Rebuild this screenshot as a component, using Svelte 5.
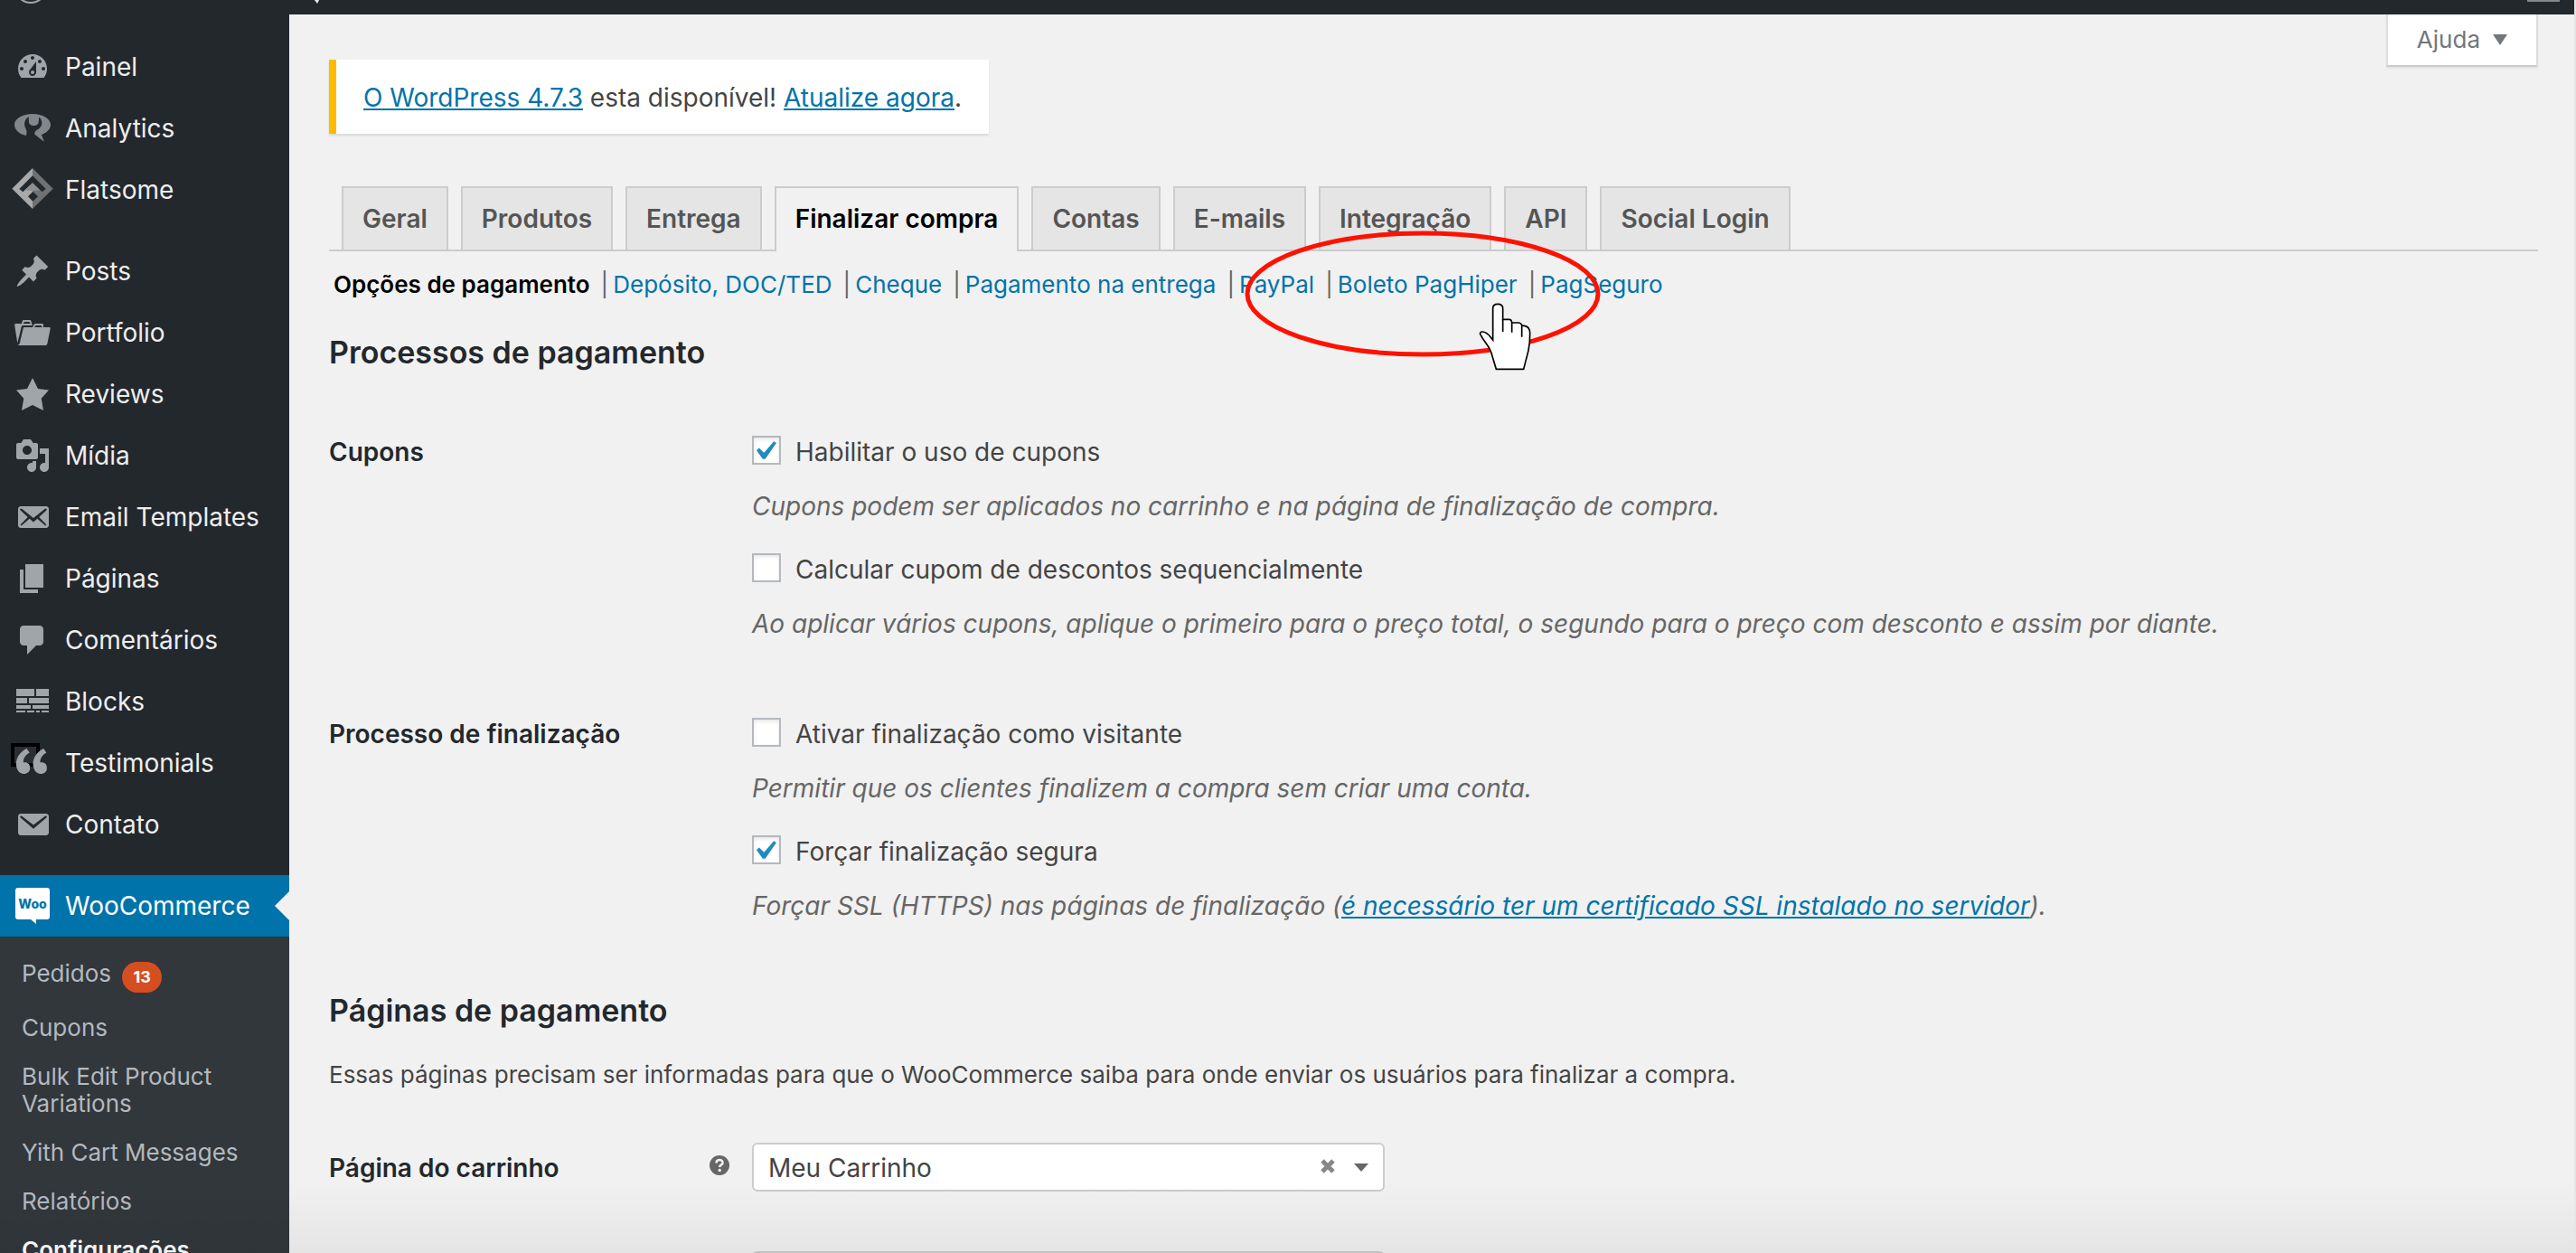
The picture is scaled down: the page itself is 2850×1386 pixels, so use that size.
<script>
  const menuTop = [
    { label: 'Painel', icon: 'dashboard' },
    { label: 'Analytics', icon: 'analytics' },
    { label: 'Flatsome', icon: 'flatsome' }
  ];
  const menuContent = [
    { label: 'Posts', icon: 'pin' },
    { label: 'Portfolio', icon: 'portfolio' },
    { label: 'Reviews', icon: 'star' },
    { label: 'Mídia', icon: 'media' },
    { label: 'Email Templates', icon: 'email' },
    { label: 'Páginas', icon: 'page' },
    { label: 'Comentários', icon: 'comment' },
    { label: 'Blocks', icon: 'blocks' },
    { label: 'Testimonials', icon: 'quote' },
    { label: 'Contato', icon: 'envelope' }
  ];
  const submenu = [
    { label: 'Pedidos', count: 13 },
    { label: 'Cupons' },
    { label: 'Bulk Edit Product Variations' },
    { label: 'Yith Cart Messages' },
    { label: 'Relatórios' },
    { label: 'Configurações', current: true }
  ];
  const tabs = ['Geral', 'Produtos', 'Entrega', 'Finalizar compra', 'Contas', 'E-mails', 'Integração', 'API', 'Social Login'];
  const activeTab = 'Finalizar compra';
  const sections = ['Opções de pagamento', 'Depósito, DOC/TED', 'Cheque', 'Pagamento na entrega', 'PayPal', 'Boleto PagHiper', 'PagSeguro'];

  let groups = $state([
    {
      title: 'Cupons',
      options: [
        { id: 'coupons', label: 'Habilitar o uso de cupons', checked: true, help: 'Cupons podem ser aplicados no carrinho e na página de finalização de compra.' },
        { id: 'sequential', label: 'Calcular cupom de descontos sequencialmente', checked: false, help: 'Ao aplicar vários cupons, aplique o primeiro para o preço total, o segundo para o preço com desconto e assim por diante.' }
      ]
    },
    {
      title: 'Processo de finalização',
      options: [
        { id: 'guest', label: 'Ativar finalização como visitante', checked: false, help: 'Permitir que os clientes finalizem a compra sem criar uma conta.' },
        { id: 'ssl', label: 'Forçar finalização segura', checked: true, help: 'Forçar SSL (HTTPS) nas páginas de finalização (', link: 'é necessário ter um certificado SSL instalado no servidor', after: ').' }
      ]
    }
  ]);

  // Single-path icons on a 20-unit grid
  const paths = {
    dashboard: 'M3.76 16h12.48c1.1-1.37 1.76-3.11 1.76-5 0-4.42-3.58-8-8-8s-8 3.58-8 8c0 1.89.66 3.63 1.76 5zM10 4c.55 0 1 .45 1 1s-.45 1-1 1-1-.45-1-1 .45-1 1-1zM6 6c.55 0 1 .45 1 1s-.45 1-1 1-1-.45-1-1 .45-1 1-1zm8 0c.55 0 1 .45 1 1s-.45 1-1 1-1-.45-1-1 .45-1 1-1zm-5.37 5.55L12 7v6c0 1.1-.9 2-2 2s-2-.9-2-2c0-.57.24-1.08.63-1.45zM4 10c.55 0 1 .45 1 1s-.45 1-1 1-1-.45-1-1 .45-1 1-1zm12 0c.55 0 1 .45 1 1s-.45 1-1 1-1-.45-1-1 .45-1 1-1zm-5 3c0-.55-.45-1-1-1s-1 .45-1 1 .45 1 1 1 1-.45 1-1z',
    pin: 'M10.44 3.02l1.82-1.82 6.36 6.35-1.83 1.82c-1.05-.68-2.48-.57-3.41.36l-.75.75c-.92.93-1.04 2.35-.35 3.41l-1.83 1.82-2.41-2.41-2.8 2.79c-.42.42-3.38 2.71-3.8 2.29s1.86-3.39 2.28-3.81l2.79-2.79L4.1 9.36l1.83-1.82c1.05.69 2.48.57 3.4-.36l.75-.75c.93-.92 1.05-2.35.36-3.41z',
    portfolio: 'M4 5H.78c-.37 0-.74.32-.69.84l1.56 9.99S3.5 8.47 3.86 6.7c.11-.53.61-.7.98-.7H10s-.7-2.08-.77-2.31C9.11 3.25 8.89 3 8.45 3H5.14c-.36 0-.7.23-.8.64C4.25 4.04 4 5 4 5zm4.88 0h-4s.42-1 .87-1h2.13c.48 0 1 1 1 1zM2.67 16.25c-.31.47-.76.75-1.26.75h15.73c.54 0 .92-.31 1.03-.83.44-2.19 1.68-8.44 1.68-8.44.07-.5-.3-.73-.62-.73H16V5.53c0-.16-.26-.53-.66-.53h-3.76c-.52 0-.87.58-.87.58L10 7H5.59c-.32 0-.63.19-.69.5 0 0-1.59 6.7-1.72 7.33-.07.37-.22.99-.51 1.42zM15.38 7H11s.58-1 1.13-1h2.29c.71 0 .96 1 .96 1z',
    star: 'M10 1l3 6 6 .75-4.12 4.62L16 19l-6-3-6 3 1.13-6.63L1 7.75 7 7z',
    media: 'M13 11V4c0-.55-.45-1-1-1h-1.67L9 1H5L3.67 3H2c-.55 0-1 .45-1 1v7c0 .55.45 1 1 1h10c.55 0 1-.45 1-1zM7 4.5c1.38 0 2.5 1.12 2.5 2.5S8.38 9.5 7 9.5 4.5 8.38 4.5 7 5.62 4.5 7 4.5zM14 6h5v10.5c0 1.38-1.12 2.5-2.5 2.5S14 17.88 14 16.5s1.12-2.5 2.5-2.5c.17 0 .34.02.5.05V9h-3V6zm-4 8.05V13h2v3.5c0 1.38-1.12 2.5-2.5 2.5S7 17.88 7 16.5 8.12 14 9.5 14c.17 0 .34.02.5.05z',
    email: 'M19 14.5v-9c0-.83-.67-1.5-1.5-1.5H3.49c-.83 0-1.49.67-1.49 1.5v9c0 .83.66 1.5 1.49 1.5H17.5c.83 0 1.5-.67 1.5-1.5zm-1.31-9.11c.33.33.15.67-.03.84L13.6 9.95l3.9 4.06c.12.14.2.36.06.51-.13.16-.43.15-.56.05l-4.37-3.73-2.14 1.95-2.13-1.95-4.37 3.73c-.13.1-.43.11-.56-.05-.14-.15-.06-.37.06-.51l3.9-4.06-4.06-3.72c-.18-.17-.36-.51-.03-.84s.67-.17.95.07l6.24 5.04 6.25-5.04c.28-.24.62-.4.95-.07z',
    page: 'M6 15V2h10v13H6zm-1 1h8v2H3V5h2v11z',
    comment: 'M5 2h9c1.1 0 2 .9 2 2v7c0 1.1-.9 2-2 2h-2l-5 5v-5H5c-1.1 0-2-.9-2-2V4c0-1.1.9-2 2-2z',
    blocks: 'M1 3h10v4H1zM12 3h7v4h-7zM1 8h6v3H1zM8 8h11v3H8zM1 12h8v2H1zM10 12h9v2h-9zM1 15h5v1H1zM7 15h4v1H7zM12 15h2v1h-2zM15 15h4v1h-4z',
    envelope: 'M19 14.5v-9c0-.83-.67-1.5-1.5-1.5H3.49C2.66 4 2 4.67 2 5.5v9c0 .83.66 1.5 1.49 1.5H17.5c.83 0 1.5-.67 1.5-1.5zM17.69 5.39c.33.33.15.67-.03.84L10.5 12.4 3.34 6.23c-.18-.17-.36-.51-.03-.84s.67-.17.95.07l6.24 4.74 6.24-4.74c.28-.24.62-.4.95-.07z',
    quote: 'M9.49 13.22c0-.74-.2-1.38-.61-1.9-.62-.78-1.83-.88-2.53-.72-.29-1.65 1.11-3.75 2.92-4.65L7.88 4c-2.73 1.3-5.42 4.28-4.96 8.05C3.21 14.43 4.59 16 6.54 16c.85 0 1.56-.25 2.12-.75s.83-1.18.83-2.03zm8.05 0c0-.74-.2-1.38-.61-1.9-.63-.78-1.83-.88-2.53-.72-.29-1.65 1.11-3.75 2.92-4.65L15.93 4c-2.73 1.3-5.41 4.28-4.95 8.05.28 2.38 1.66 3.95 3.61 3.95.85 0 1.56-.25 2.12-.75s.83-1.18.83-2.03z'
  };
</script>

{#snippet menuIcon(name)}
  {#if name === 'analytics'}
    <svg class="icon" viewBox="0 0 120 120" aria-hidden="true">
      <path class="muted" d="M60 12C93 12 120 28 120 48C120 62 108 74 90 81L98 104L66 79Q66 72 73 66C94 57 96 38 82 22L80 39C79 55 49 55 48 39L47 22C33 30 30 46 37 60C42 68 41 76 39 84C16 79 0 65 0 48C0 28 27 12 60 12z" />
    </svg>
  {:else if name === 'flatsome'}
    <svg class="icon" viewBox="0 0 120 120" aria-hidden="true">
      <g transform="translate(-8 -12)">
        <path fill="#a9a9a9" d="M68 0L0 68L68 135z" />
        <path fill="#707172" d="M68 0L136 68L68 135z" />
        <path fill="#23282d" d="M68 25L112 69L100 79L68 49L36 79L24 69z" />
        <path fill="#8f8f8f" d="M68 49L92 73L68 76L44 73z" />
        <path fill="#23282d" d="M69 78L86 94L69 110L53 94z" />
      </g>
    </svg>
  {:else}
    <svg class="icon" viewBox="0 0 20 20" aria-hidden="true">
      {#if name === 'quote'}
        <path d="M-1 0h14v11H-1z" fill="#2b2f33" stroke="#000" stroke-width="2" />
        <path d={paths.quote} transform="translate(-2.4 -2.6) scale(1.16)" />
      {:else}
        <path d={paths[name]} fill-rule="evenodd" />
      {/if}
    </svg>
  {/if}
{/snippet}

{#snippet menuList(items)}
  <ul class="menu">
    {#each items as item}
      <li><a class="menu-link" href="#{item.icon}">{@render menuIcon(item.icon)}{item.label}</a></li>
    {/each}
  </ul>
{/snippet}

<div class="shell">
  <header class="adminbar">
    <svg class="bar-logo" viewBox="0 0 40 16" aria-hidden="true"><circle cx="20" cy="-14" r="17" fill="none" stroke="#a0a5aa" stroke-width="2" /></svg>
    <svg class="bar-bubble" viewBox="0 0 8 16" aria-hidden="true"><path d="M1 0h5L4 4z" fill="#eee" /></svg>
    <span class="bar-avatar"></span>
  </header>

  <div class="body">
    <nav class="sidebar" aria-label="Menu principal">
      {@render menuList(menuTop)}
      {@render menuList(menuContent)}
      <a class="menu-link current" href="#woocommerce">
        <svg class="icon" viewBox="0 0 40 40" aria-hidden="true">
          <path fill="#fff" d="M4 0h32a3 3 0 0 1 3 3v29a3 3 0 0 1-3 3H24v5l-6-5H4a3 3 0 0 1-3-3V3a3 3 0 0 1 3-3z" />
          <text x="20" y="23" text-anchor="middle" fill="#0073aa">Woo</text>
        </svg>
        WooCommerce
      </a>
      <ul class="submenu">
        {#each submenu as item}
          <li>
            <a class:selected={item.current} href="#sub">
              <span>{item.label}</span>
              {#if item.count}<span class="badge">{item.count}</span>{/if}
            </a>
          </li>
        {/each}
      </ul>
    </nav>

    <main>
      <div class="top">
        <p class="notice"><a href="#versao">O WordPress 4.7.3</a> esta disponível! <a href="#atualizar">Atualize agora</a>.</p>
        <button class="help" type="button">
          Ajuda
          <svg viewBox="0 0 16 12" aria-hidden="true"><path d="M0 0h16L8 12z" /></svg>
        </button>
      </div>

      <nav class="tabs" aria-label="Abas">
        {#each tabs as tab}
          <a class="tab" class:active={tab === activeTab} href="#tab">{tab}</a>
        {/each}
      </nav>

      <nav class="sections" aria-label="Seções">
        {#each sections as section, i}
          <span>{#if i > 0}|{/if}<a class:active={i === 0} href="#section">{section}</a></span>
        {/each}
        <svg class="ring" viewBox="0 0 394 140" aria-hidden="true"><ellipse cx="197" cy="70" rx="194" ry="67" /></svg>
        <svg class="hand" viewBox="0 0 240 285" aria-hidden="true">
          <path fill="#fff" d="M80 153V48Q80 34 96 34Q113 34 113 48V85H136Q142 86 143 96H166Q174 97 177 106H184Q202 108 203 130L202 160Q199 190 191 215L182 250H91L79 210Q73 185 60 168Q45 148 38 134Q36 125 47 126Q60 128 72 143z" />
          <path fill="none" d="M113 84V126M143 96V128M176 106V143" />
        </svg>
      </nav>

      <h2>Processos de pagamento</h2>
      <div class="groups">
        {#each groups as group}
          <div class="field" role="group" aria-label={group.title}>
            <h3>{group.title}</h3>
            <div class="options">
              {#each group.options as option}
                <div>
                  <label class="check" for={option.id}>
                    <span class="box">
                      <input id={option.id} type="checkbox" bind:checked={option.checked} />
                      {#if option.checked}
                        <svg class="tick" viewBox="5.78 4.89 10.4 9.33" aria-hidden="true"><path d="M14.83 4.89l1.34.94-5.81 8.38H9.02L5.78 9.67l1.34-1.25 2.57 2.4z" /></svg>
                      {/if}
                    </span>
                    {option.label}
                  </label>
                  <p class="description">{option.help}{#if option.link}<a href="#ssl">{option.link}</a>{option.after}{/if}</p>
                </div>
              {/each}
            </div>
          </div>
        {/each}
      </div>

      <h2 class="pages-title">Páginas de pagamento</h2>
      <p class="intro">Essas páginas precisam ser informadas para que o WooCommerce saiba para onde enviar os usuários para finalizar a compra.</p>
      <div class="selects">
        <div class="field">
          <div class="label-cell">
            <label for="cart-page">Página do carrinho</label>
            <svg class="tip" viewBox="0 0 22 22" aria-hidden="true">
              <circle cx="11" cy="11" r="11" />
              <path d="M7.5 8.5C7.5 3.5 15 4 14.5 8.500C14.2 10.5 11.2 10.5 11.2 13" fill="none" stroke="#f1f1f1" stroke-width="2.6" />
              <circle cx="11.2" cy="16.5" r="1.7" fill="#f1f1f1" />
            </svg>
          </div>
          <div class="picker">
            <select id="cart-page"><option>Meu Carrinho</option></select>
            <button class="clear" type="button" aria-label="Limpar">
              <svg viewBox="0 0 18 18" aria-hidden="true"><path d="M3 3L15 15M15 3L3 15" /></svg>
            </button>
            <svg class="caret" viewBox="0 0 16 9" aria-hidden="true"><path d="M0 0h16L8 9z" /></svg>
          </div>
        </div>
        <div class="field">
          <span></span>
          <div class="picker"><select aria-label="Página de finalização"></select></div>
        </div>
      </div>
    </main>
  </div>
  <div class="fade"></div>
</div>

<style>
  :global(body) { margin: 0; background: #f1f1f1; }
  .shell {
    position: relative;
    box-sizing: border-box;
    height: 100vh;
    overflow: hidden;
    border-right: 2px solid #e6e6e6;
    background: #f1f1f1;
    color: #444;
    font: 28px/40px Inter, "Liberation Sans", sans-serif;
    display: flex;
    flex-direction: column;
  }
  a { color: #0073aa; }
  p, h2, h3, ul { margin: 0; padding: 0; }
  ul { list-style: none; }

  .adminbar { display: flex; flex: none; height: 16px; background: #23282d; }
  .bar-logo { width: 40px; height: 16px; margin-left: 14px; }
  .bar-bubble { width: 8px; height: 16px; margin-left: 293px; }
  .bar-avatar { width: 36px; height: 2px; margin: 0 16px 0 auto; background: #82878c; }

  .body { display: flex; flex: 1; min-height: 0; }
  .sidebar { flex: none; box-sizing: border-box; width: 320px; padding-top: 24px; background: #23282d; }
  .menu { margin-bottom: 22px; }
  .menu-link {
    display: flex;
    align-items: center;
    gap: 16px;
    padding: 14px 16px;
    color: #eee;
    text-decoration: none;
  }
  .icon { flex: none; width: 40px; height: 40px; overflow: visible; fill: #a0a5aa; }
  .icon text { font: 800 14px Inter, sans-serif; }
  .muted { fill: #82878c; }
  .current { position: relative; background: #0073aa; color: #fff; }
  .current::after {
    content: "";
    position: absolute;
    right: 0;
    border: 16px solid transparent;
    border-left-width: 0;
    border-right-color: #f1f1f1;
  }
  .submenu { height: 400px; padding-top: 14px; background: #32373c; }
  .submenu a {
    display: flex;
    align-items: flex-start;
    gap: 12px;
    padding: 12px 24px;
    color: #b4b9be;
    font-size: 26px;
    line-height: 30px;
    text-decoration: none;
  }
  .submenu .selected { color: #fff; font-weight: 600; }
  .badge {
    min-width: 44px;
    margin-top: 2px;
    border-radius: 17px;
    background: #d54e21;
    color: #fff;
    font-size: 18px;
    font-weight: 700;
    line-height: 34px;
    text-align: center;
  }

  main { flex: 1; min-width: 0; padding: 0 40px 0 44px; }
  .top { display: flex; justify-content: space-between; align-items: flex-start; }
  .notice {
    margin-top: 50px;
    padding: 22px 30px 20px;
    border-left: 8px solid #ffba00;
    background: #fff;
    box-shadow: 0 2px 2px rgba(0, 0, 0, 0.1);
  }
  .help {
    display: flex;
    align-items: center;
    gap: 14px;
    padding: 0 32px;
    border: 2px solid #ddd;
    border-top: 0;
    border-bottom-color: #ccc;
    background: #fff;
    box-shadow: 0 2px 2px rgba(0, 0, 0, 0.05);
    color: #72777c;
    font: 26px/56px Inter, sans-serif;
  }
  .help svg { width: 16px; height: 12px; fill: #72777c; }

  .tabs {
    display: flex;
    gap: 14px;
    margin-top: 58px;
    padding-left: 14px;
    border-bottom: 2px solid #ccc;
  }
  .tab {
    padding: 10px 21px;
    border: 2px solid #ccc;
    border-bottom: 0;
    background: #e5e5e5;
    color: #555;
    font-weight: 600;
    line-height: 48px;
    text-decoration: none;
  }
  .tab.active { margin-bottom: -2px; padding-bottom: 12px; background: #f1f1f1; color: #000; }

  .sections {
    position: relative;
    display: flex;
    gap: 7px;
    margin-top: 15px;
    color: #666;
    font-size: 26px;
    line-height: 44px;
    white-space: nowrap;
  }
  .sections a { padding: 0 5px; text-decoration: none; }
  .sections .active { color: #000; font-weight: 600; }
  .ring { position: absolute; left: 1013px; top: -38px; width: 394px; height: 140px; fill: none; stroke: #ff1100; stroke-width: 5; }
  .hand { position: absolute; left: 1261px; top: 32px; width: 80px; height: 95px; stroke: #000; stroke-width: 5; }

  h2 { margin-top: 29px; color: #23282d; font-size: 34px; font-weight: 600; line-height: 48px; }
  h3, .label-cell { color: #23282d; font-size: 28px; font-weight: 600; }
  h3 { line-height: 36px; }
  .groups { display: grid; gap: 84px; margin-top: 68px; }
  .field { display: grid; grid-template-columns: 468px 1fr; }
  .options { display: grid; gap: 32px; }
  .check { display: flex; gap: 16px; line-height: 36px; }
  .box { display: grid; width: 32px; height: 32px; }
  .box > * { grid-area: 1 / 1; }
  .box input {
    appearance: none;
    box-sizing: border-box;
    width: 32px;
    height: 32px;
    margin: 0;
    border: 2px solid #b4b9be;
    background: #fff;
    box-shadow: inset 0 2px 4px rgba(0, 0, 0, 0.1);
  }
  .tick { place-self: center; width: 22px; height: 20px; fill: #1e8cbe; pointer-events: none; }
  .description { margin-top: 22px; color: #666; font-style: italic; }

  .pages-title { margin-top: 72px; }
  .intro { margin-top: 27px; font-size: 26px; }
  .selects { display: grid; gap: 66px; margin-top: 55px; }
  .label-cell { display: flex; justify-content: space-between; padding-right: 25px; line-height: 56px; }
  .tip { width: 22px; height: 22px; margin-top: 14px; fill: #666; }
  .field:has(.label-cell) { height: 54px; }
  .picker { position: relative; width: 700px; height: 54px; }
  .picker select {
    appearance: none;
    box-sizing: border-box;
    width: 100%;
    height: 54px;
    padding: 2px 88px 0 16px;
    border: 2px solid #ccc;
    border-radius: 6px;
    background: #fff;
    color: #444;
    font: 28px/48px Inter, sans-serif;
  }
  .clear { position: absolute; right: 54px; top: 17px; width: 18px; height: 18px; padding: 0; border: 0; background: none; }
  .clear svg { display: block; stroke: #888; stroke-width: 5; }
  .caret { position: absolute; right: 18px; top: 23px; width: 16px; height: 9px; fill: #666; pointer-events: none; }
  .fade {
    position: absolute;
    inset: auto 0 0 0;
    height: 80px;
    background: linear-gradient(rgba(0, 0, 0, 0), rgba(0, 0, 0, 0.05));
    pointer-events: none;
  }
</style>
